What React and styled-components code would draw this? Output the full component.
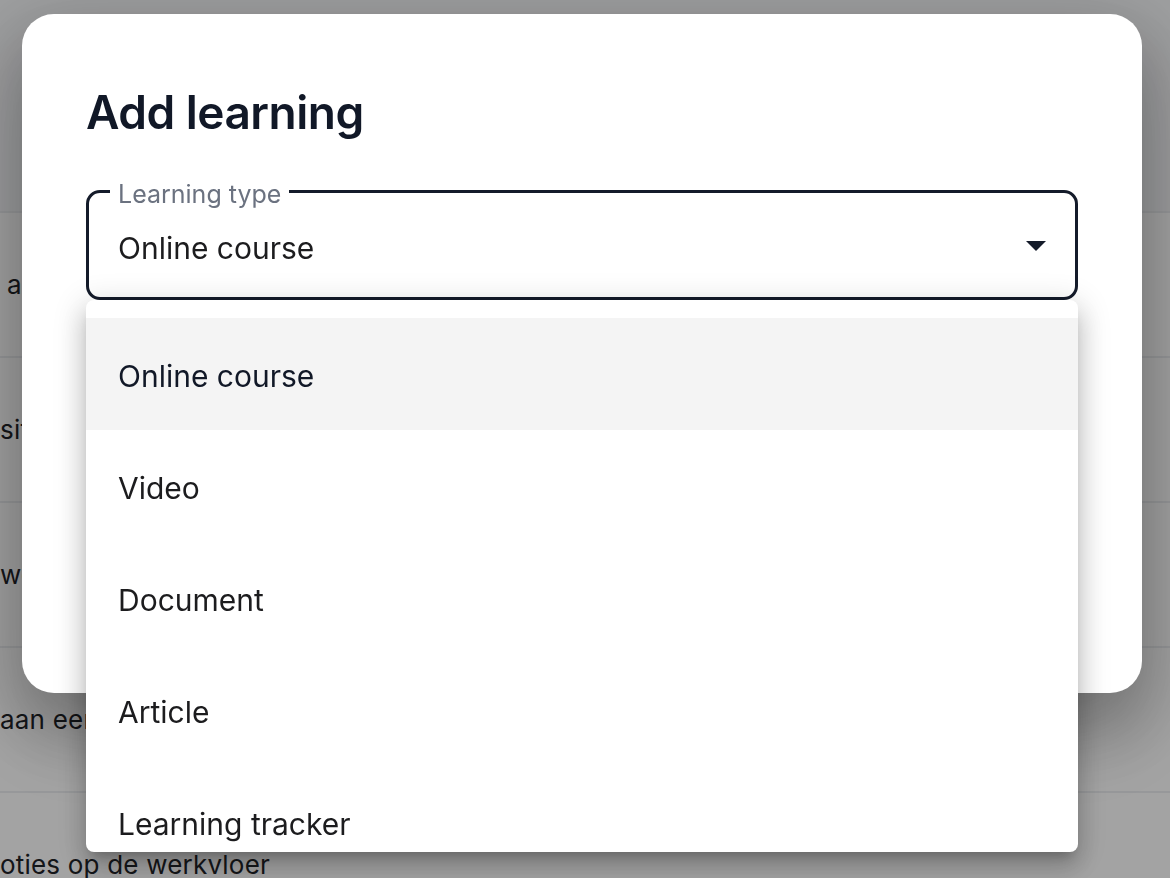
import React from "react";
import styled, { createGlobalStyle } from "styled-components";

const GlobalStyle = createGlobalStyle`
  html, body { margin: 0; padding: 0; }
  body {
    font-family: Inter, "Noto Sans", "Liberation Sans", sans-serif;
    background: #ffffff;
    overflow: hidden;
  }
  * { box-sizing: border-box; }
`;

const Page = styled.div`
  width: 1170px;
  height: 878px;
  background: #ffffff;
  overflow: hidden;
`;

const PageHeader = styled.div`
  height: 213px;
  background: #f6f7f9;
  border-bottom: 2px solid #eceef1;
`;

const PageRow = styled.div`
  height: 145px;
  display: flex;
  align-items: center;
  padding-left: ${(p) => p.$indent || 0}px;
  border-bottom: 2px solid #eceef1;
  font-size: 26px;
  letter-spacing: 0.2px;
  color: #1f2328;
  white-space: nowrap;
`;

const Backdrop = styled.div`
  position: fixed;
  inset: 0;
  background: rgba(0, 0, 0, 0.36);
`;

const Dialog = styled.div`
  position: fixed;
  left: 22px;
  top: 14px;
  width: 1120px;
  height: 679px;
  background: #ffffff;
  border-radius: 32px;
  padding: 70px 64px 0 64px;
  box-shadow: 0 22px 70px 8px rgba(0, 0, 0, 0.22), 0 48px 76px 6px rgba(0, 0, 0, 0.14);
  display: flex;
  flex-direction: column;
`;

const Title = styled.h2`
  margin: 0 0 50px 0;
  font-size: 46px;
  line-height: 56px;
  font-weight: 600;
  color: #111827;
  letter-spacing: -0.5px;
`;

const Field = styled.div`
  position: relative;
  width: 992px;
`;

const FieldBox = styled.div`
  height: 110px;
  border: 3px solid #141b2a;
  border-radius: 14px;
  display: flex;
  align-items: center;
  justify-content: space-between;
  padding: 0 15px 0 29px;
`;

const FieldLabel = styled.span`
  position: absolute;
  left: 24px;
  top: -10px;
  padding: 0 8px;
  background: #ffffff;
  font-size: 25px;
  line-height: 28px;
  color: #6b7280;
`;

const FieldValue = styled.span`
  font-size: 30px;
  color: #1c1c1e;
  padding-top: 5px;
`;

const Menu = styled.ul`
  position: absolute;
  top: 110px;
  left: 0;
  width: 992px;
  height: 552px;
  margin: 0;
  padding: 18px 0 0 0;
  list-style: none;
  background: #ffffff;
  border-radius: 8px;
  overflow: hidden;
  box-shadow: 0 10px 12px -6px rgba(0, 0, 0, 0.2), 0 16px 24px 2px rgba(0, 0, 0, 0.14),
    0 6px 30px 6px rgba(0, 0, 0, 0.12);
`;

const MenuItem = styled.li`
  height: 112px;
  display: flex;
  align-items: center;
  padding: 4px 32px 0 32px;
  font-size: 30px;
  color: ${(p) => (p.$selected ? "#111827" : "#1c1c1e")};
  background: ${(p) => (p.$selected ? "#f4f4f4" : "transparent")};
`;

const ArrowIcon = () => (
  <svg width="48" height="48" viewBox="0 0 24 24" aria-hidden="true">
    <path d="M7 10l5 5 5-5z" fill="#141b2a" />
  </svg>
);

const items = ["Online course", "Video", "Document", "Article", "Learning tracker"];

export default function App() {
  return (
    <>
      <GlobalStyle />
      <Page>
        <PageHeader />
        <PageRow $indent={7}>a aan de slag met je ontwikkeling</PageRow>
        <PageRow>sitieve feedback geven en ontvangen</PageRow>
        <PageRow>werken in een team</PageRow>
        <PageRow>aan een gesprek beginnen</PageRow>
        <PageRow>oties op de werkvloer</PageRow>
      </Page>
      <Backdrop />
      <Dialog>
        <Title>Add learning</Title>
        <Field>
          <FieldBox>
            <FieldValue>Online course</FieldValue>
            <ArrowIcon />
          </FieldBox>
          <FieldLabel>Learning type</FieldLabel>
          <Menu>
            {items.map((it, i) => (
              <MenuItem key={it} $selected={i === 0}>
                {it}
              </MenuItem>
            ))}
          </Menu>
        </Field>
      </Dialog>
    </>
  );
}
